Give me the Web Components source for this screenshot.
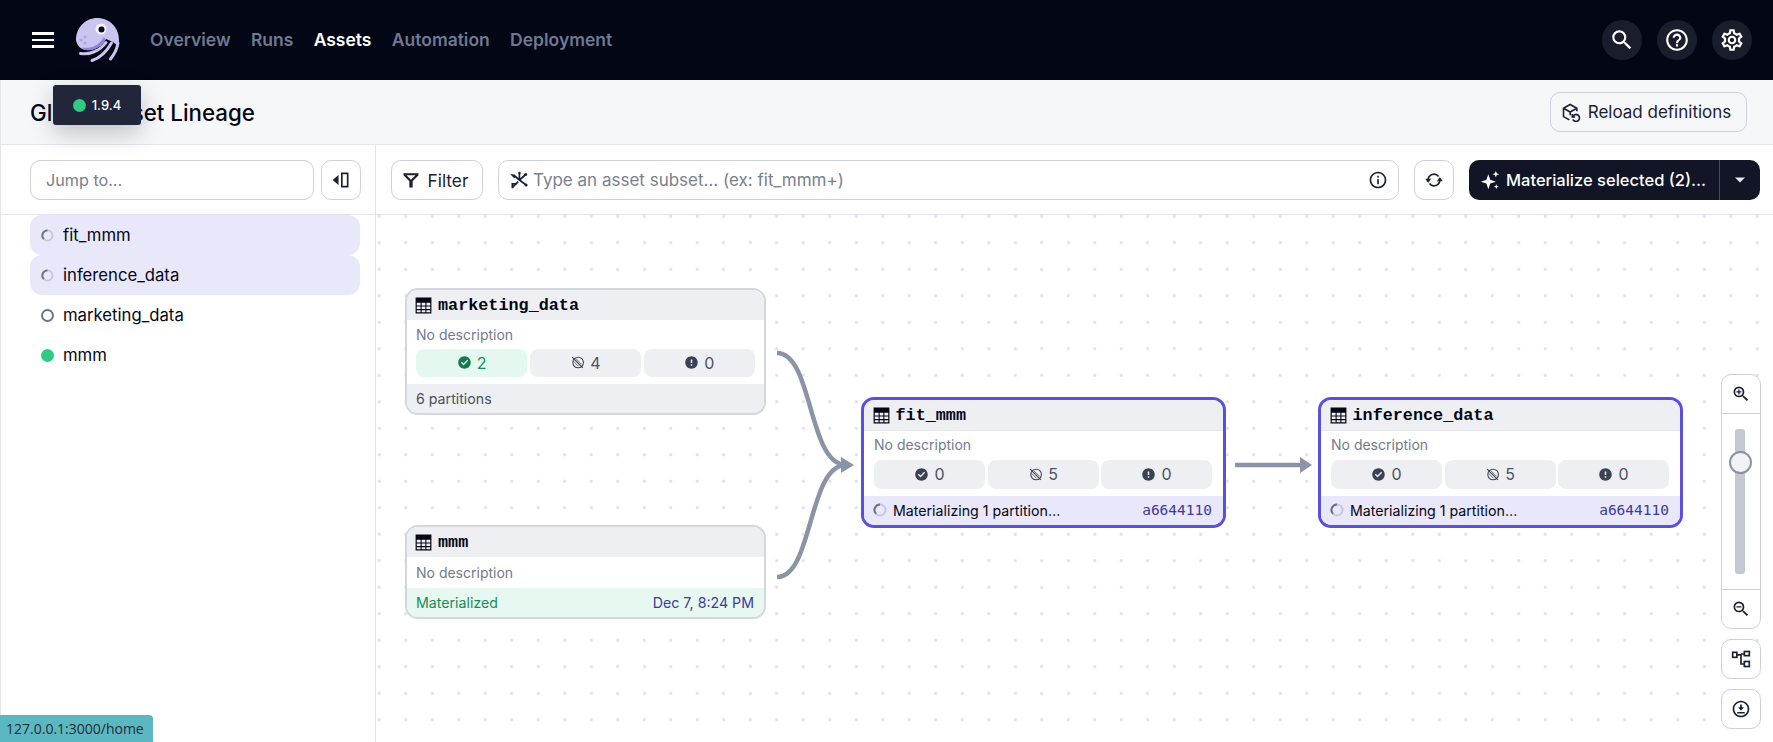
<!DOCTYPE html>
<html lang="en">
<head>
<meta charset="utf-8">
<title>Global Asset Lineage</title>
<style>
  html, body { margin: 0; height: 100%; overflow: hidden; background: #fff; }
  body { font-family: Inter, "Noto Sans", sans-serif; color: #030615; display: flex; flex-direction: column; }
  .main { flex: 1; display: flex; min-height: 0; }
</style>
</head>
<body>
<top-nav></top-nav>
<page-header></page-header>
<div class="main">
  <asset-sidebar></asset-sidebar>
  <graph-panel></graph-panel>
</div>
<version-tip></version-tip>
<link-status></link-status>

<script>
const ICONS = {
  search: '<path d="M15.5 14h-.79l-.28-.27A6.471 6.471 0 0 0 16 9.5 6.5 6.5 0 1 0 9.5 16c1.61 0 3.09-.59 4.23-1.57l.27.28v.79l5 4.99L20.49 19l-4.99-5zm-6 0C7.01 14 5 11.99 5 9.5S7.01 5 9.5 5 14 7.01 14 9.5 11.99 14 9.5 14z"/>',
  help: '<path d="M11 18h2v-2h-2v2zm1-16C6.48 2 2 6.48 2 12s4.48 10 10 10 10-4.48 10-10S17.52 2 12 2zm0 18c-4.41 0-8-3.59-8-8s3.59-8 8-8 8 3.59 8 8-3.59 8-8 8zm0-14c-2.21 0-4 1.79-4 4h2c0-1.1.9-2 2-2s2 .9 2 2c0 2-3 1.75-3 5h2c0-2.25 3-2.5 3-5 0-2.21-1.79-4-4-4z"/>',
  settings: '<path d="M19.43 12.98c.04-.32.07-.64.07-.98 0-.34-.03-.66-.07-.98l2.11-1.65c.19-.15.24-.42.12-.64l-2-3.46a.5.5 0 0 0-.61-.22l-2.49 1c-.52-.4-1.08-.73-1.69-.98l-.38-2.65A.488.488 0 0 0 14 2h-4c-.25 0-.46.18-.49.42l-.38 2.65c-.61.25-1.17.59-1.69.98l-2.49-1a.566.566 0 0 0-.18-.03c-.17 0-.34.09-.43.25l-2 3.46c-.13.22-.07.49.12.64l2.11 1.65c-.04.32-.07.65-.07.98 0 .33.03.66.07.98l-2.11 1.65c-.19.15-.24.42-.12.64l2 3.46a.5.5 0 0 0 .61.22l2.49-1c.52.4 1.08.73 1.69.98l.38 2.65c.03.24.24.42.49.42h4c.25 0 .46-.18.49-.42l.38-2.65c.61-.25 1.17-.59 1.69-.98l2.49 1c.06.02.12.03.18.03.17 0 .34-.09.43-.25l2-3.46c.12-.22.07-.49-.12-.64l-2.11-1.65zm-1.98-1.71c.04.31.05.52.05.73 0 .21-.02.43-.05.73l-.14 1.13.89.7 1.08.84-.7 1.21-1.27-.51-1.04-.42-.9.68c-.43.32-.84.56-1.25.73l-1.06.43-.16 1.13-.2 1.35h-1.4l-.19-1.35-.16-1.13-1.06-.43c-.43-.18-.83-.41-1.23-.71l-.91-.7-1.06.43-1.27.51-.7-1.21 1.08-.84.89-.7-.14-1.13c-.03-.31-.05-.54-.05-.74s.02-.43.05-.73l.14-1.13-.89-.7-1.08-.84.7-1.21 1.27.51 1.04.42.9-.68c.43-.32.84-.56 1.25-.73l1.06-.43.16-1.13.2-1.35h1.39l.19 1.35.16 1.13 1.06.43c.43.18.83.41 1.23.71l.91.7 1.06-.43 1.27-.51.7 1.21-1.07.85-.89.7.14 1.13zM12 8c-2.21 0-4 1.79-4 4s1.79 4 4 4 4-1.79 4-4-1.79-4-4-4zm0 6c-1.1 0-2-.9-2-2s.9-2 2-2 2 .9 2 2-.9 2-2 2z"/>',
  check: '<path d="M12 2C6.48 2 2 6.48 2 12s4.48 10 10 10 10-4.48 10-10S17.52 2 12 2zm-1.6 14.6L6.2 12.4l1.5-1.5 2.7 2.7 5.9-5.9 1.5 1.5-7.4 7.4z"/>',
  error: '<path d="M12 2C6.48 2 2 6.48 2 12s4.48 10 10 10 10-4.48 10-10S17.52 2 12 2zm1.2 15h-2.4v-2.2h2.4V17zm0-4.2h-2.4V7h2.4v5.8z"/>',
  blocked: '<g fill="none" stroke="currentColor"><circle cx="13" cy="12" r="8.5" stroke-width="1.700"/><path d="M3.500 3.500l17 17" stroke-width="1.800"/><path d="M9 5.500l9.500 9.500M5.500 10l8 8" stroke-width="1.200"/></g>',
  table: '<path fill-rule="evenodd" d="M2 2h20v20H2V2zm1.500 6.500v3.500h4.800V8.500H3.500zm6.200 0v3.500h4.600V8.500H9.700zm6 0v3.500h4.800V8.500h-4.800zM3.500 13.400v3.100h4.800v-3.100H3.500zm6.200 0v3.100h4.600v-3.100H9.700zm6 0v3.100h4.800v-3.100h-4.800zM3.500 18v2.500h4.800V18H3.500zm6.200 0v2.500h4.600V18H9.700zm6 0v2.500h4.800V18h-4.800z"/>',
  filter: '<path d="M3 4h18v2.400l-7 7.200V21h-4v-7.400L3 6.400V4zm3.600 2.200l5.400 5.600 5.400-5.600H6.600z"/>',
  burst: '<g stroke="currentColor" stroke-width="2" fill="currentColor"><path d="M12.500 12L5.500 6M12.500 12V4M12.500 12l7-6M12.500 12l8 6M11 14l-6 6" fill="none"/><path d="M1.500 5h3.500l3 3.300-1.800 1.700z" stroke="none"/><circle cx="12.500" cy="3.500" r="1.500" stroke="none"/><circle cx="20" cy="5.500" r="1.800" stroke="none"/><circle cx="20.500" cy="18" r="1.800" stroke="none"/><path d="M3 15.500h6.500v2H5.500V22H3z" stroke="none"/></g>',
  info: '<path d="M11 7h2v2h-2V7zm0 4h2v6h-2v-6zm1-9C6.480 2 2 6.480 2 12s4.480 10 10 10 10-4.480 10-10S17.520 2 12 2zm0 18c-4.410 0-8-3.590-8-8s3.590-8 8-8 8 3.590 8 8-3.590 8-8 8z"/>',
  sync: '<g fill="none" stroke="currentColor" stroke-width="2"><path d="M5 12a7 7 0 0 1 12.500-4.300"/><path d="M19 12a7 7 0 0 1-12.500 4.300"/></g><path d="M1.500 10.500h7L5 15.500zM15.500 13.500h7L19 8.500z"/>',
  sparkle: '<path d="M10 5l2.300 6.700L19 14l-6.700 2.300L10 23l-2.300-6.700L1 14l6.700-2.300L10 5zM19 1l1 3 3 1-3 1-1 3-1-3-3-1 3-1 1-3zM19.500 17l.8 2.200 2.200.8-2.200.8-.8 2.200-.8-2.200-2.200-.8 2.200-.8.800-2.200z"/>',
  caret: '<path d="M6 9h12l-6 6z"/>',
  collapse: '<path d="M9 6v12L2 12zM12 3h9v18h-9V3zm2 2v14h5V5h-5z"/>',
  reload: '<g fill="none" stroke="currentColor" stroke-width="1.900"><path d="M10 21.500L3 17.500V7.500L11 3l8 4.500v3.500M3 7.500l8 4.500 8-4.500M11 12v4"/><path d="M13.500 14.500v3.500H17M14 18a4.200 4.200 0 1 1 .2 2.800"/></g>',
  zoomIn: '<path d="M15.500 14h-.79l-.28-.27A6.471 6.471 0 0 0 16 9.500 6.500 6.500 0 1 0 9.500 16c1.610 0 3.090-.59 4.230-1.570l.27.28v.79l5 4.990L20.490 19l-4.990-5zm-6 0C7.010 14 5 11.990 5 9.500S7.010 5 9.500 5 14 7.010 14 9.500 11.990 14 9.500 14zM10.300 6.500H8.700v2.200H6.500v1.600h2.200v2.200h1.600v-2.200h2.200V8.700h-2.200z"/>',
  zoomOut: '<path d="M15.500 14h-.79l-.28-.27A6.471 6.471 0 0 0 16 9.500 6.500 6.500 0 1 0 9.500 16c1.610 0 3.090-.59 4.230-1.570l.27.28v.79l5 4.990L20.490 19l-4.990-5zm-6 0C7.010 14 5 11.990 5 9.500S7.010 5 9.500 5 14 7.010 14 9.500 11.990 14 9.500 14zM6.500 8.700h6v1.600h-6z"/>',
  tree: '<g fill="none" stroke="currentColor" stroke-width="2"><rect x="2" y="4" width="5" height="6"/><rect x="16" y="3" width="6" height="5"/><rect x="16" y="15" width="6" height="6"/><path d="M7 7h5v11h4M12 6h4"/></g>',
  download: '<path d="M12 2C6.480 2 2 6.480 2 12s4.480 10 10 10 10-4.480 10-10S17.520 2 12 2zm0 18c-4.410 0-8-3.590-8-8s3.590-8 8-8 8 3.590 8 8-3.590 8-8 8zM7.500 15.500h9v1.800h-9zM13 6.500h-2v3.500H8.500l3.500 4 3.500-4H13z"/>'
};

function icon(name, size) {
  return `<svg width="${size}" height="${size}" viewBox="0 0 24 24" fill="currentColor" aria-hidden="true">${ICONS[name]}</svg>`;
}

function spinner(size) {
  return `<svg width="${size}" height="${size}" viewBox="0 0 14 14" fill="none" aria-hidden="true">
    <circle cx="7" cy="7" r="5.500" stroke="#c6c9d4" stroke-width="2"/>
    <path d="M7 1.500A5.500 5.500 0 0 0 3 10.800" stroke="#6c7387" stroke-width="2"/>
  </svg>`;
}

class Base extends HTMLElement {
  constructor() {
    super();
    this.shadowDOM = this.attachShadow({ mode: "open" });
  }

  connectedCallback() {
    this.render();
  }
}

class TopNav extends Base {
  render() {
    const links = ["Overview", "Runs", "Assets", "Automation", "Deployment"];
    this.shadowDOM.innerHTML = `
      <style>
      :host { display: flex; align-items: center; flex: 0 0 80px; height: 80px; background: #030615; box-sizing: border-box; padding: 0 21px 0 32px; }
      .burger { display: flex; flex-direction: column; gap: 4px; width: 22px; margin-right: 21px; }
      .burger i { height: 2.600px; background: #fff; display: block; }
      .logo { display: block; margin-right: 30px; }
      nav { display: flex; gap: 20.300px; padding-bottom: 1px; font-size: 17.500px; font-weight: 600; }
      nav a { color: #6f7a92; }
      nav a.on { color: #fff; }
      .tools { margin-left: auto; display: flex; gap: 15px; }
      .tools span { width: 40px; height: 40px; border-radius: 50%; background: #191d2c; color: #fff; display: flex; align-items: center; justify-content: center; }
      </style>
      <div class="burger"><i></i><i></i><i></i></div>
      <svg class="logo" width="45" height="45" viewBox="0 0 45 45" aria-hidden="true">
        <path d="M1 22C1 9 11 0 22 0c13 0 22 10 22 22 0 2-.3 4-1 6l-5-4-7-3c-4 8-13 12-21 11-4-1-8-4-9-10z" fill="#c9c5ee"/>
        <path d="M7 29.500c8 1.500 17-1.500 21.500-10L31 21c-4 8-13 12-21 11z" fill="#8d87d6"/>
        <g fill="none" stroke="#c9c5ee" stroke-width="3" stroke-linecap="round">
          <path d="M5.500 35.500C14 37 25 33 31 24.500"/>
          <path d="M17 42.500C25 40 32 33 36.500 25"/>
          <path d="M35.500 41C39.500 36 42 31 43 25"/>
        </g>
        <circle cx="26" cy="11" r="5.500" fill="#f5f4fc"/>
        <circle cx="26.500" cy="11.500" r="3" fill="#0a0d1e"/>
        <g fill="#a8a3e2"><circle cx="6" cy="22" r="1.600"/><circle cx="10" cy="19" r="1.400"/><circle cx="10" cy="25" r="1.600"/></g>
      </svg>
      <nav>${links.map((l) => `<a class="${l === "Assets" ? "on" : ""}">${l}</a>`).join("")}</nav>
      <div class="tools">
        <span>${icon("search", 26)}</span>
        <span>${icon("help", 26)}</span>
        <span>${icon("settings", 26)}</span>
      </div>
    `;
  }
}

class PageHeader extends Base {
  render() {
    this.shadowDOM.innerHTML = `
      <style>
      :host { display: flex; align-items: center; justify-content: space-between; flex: 0 0 65px; box-sizing: border-box; height: 65px; padding: 0 26px 0 30px; background: #f6f7f9; border-bottom: 1px solid #e3e5ea; border-left: 1px solid #e3e5ea; }
      h1 { margin: 0 0 0 -1px; font-size: 22.300px; font-weight: 500; }
      </style>
      <h1>Global Asset Lineage</h1>
      <tool-button label="Reload definitions" icon="reload" style="width:197px;background:transparent;font-size:17px;padding-right:5px"></tool-button>
    `;
  }
}

class ToolButton extends Base {
  render() {
    const name = this.getAttribute("icon");
    const label = this.getAttribute("label");
    this.shadowDOM.innerHTML = `
      <style>
      :host { display: flex; align-items: center; justify-content: center; gap: 7px; box-sizing: border-box; height: 40px; min-width: 40px; background: #fff; border: 1.500px solid #ced1db; border-radius: 10px; font-size: 17.300px; color: #1b2032; flex: none; }
      </style>
      ${icon(name, 20)}${label ? `<span>${label}</span>` : ""}
    `;
  }
}

class AssetSidebar extends Base {
  render() {
    const rows = [
      ["fit_mmm", "run"],
      ["inference_data", "run"],
      ["marketing_data", "missing"],
      ["mmm", "ok"]
    ];
    this.shadowDOM.innerHTML = `
      <style>
      :host { display: flex; flex-direction: column; flex: 0 0 376px; box-sizing: border-box; width: 376px; border-right: 1.500px solid #e3e5ea; border-left: 1px solid #e3e5ea; }
      .search { display: flex; gap: 7px; height: 70px; box-sizing: border-box; padding: 15px 14px 0 29px; border-bottom: 1px solid #e3e5ea; }
      .jump { flex: 1; height: 40px; box-sizing: border-box; border: 1.500px solid #ced1db; border-radius: 10px; padding-left: 15px; display: flex; align-items: center; color: #79808f; font-size: 16.200px; }
      ul { list-style: none; margin: 0; padding: 0 15px 0 29px; }
      li { display: flex; align-items: center; height: 40px; gap: 9px; padding-left: 11px; border-radius: 12px; font-size: 16.700px; }
      li.sel { background: #e9e7fa; }
      .dot { width: 13px; height: 13px; box-sizing: border-box; border-radius: 50%; flex: none; }
      .ok { background: #2fcb82; }
      .missing { border: 2.400px solid #6b7388; }
      .run { display: flex; }
      </style>
      <div class="search">
        <div class="jump">Jump to…</div>
        <tool-button icon="collapse"></tool-button>
      </div>
      <ul>
        ${rows.map(([name, state]) => `
          <li class="${state === "run" ? "sel" : ""}">
            <span class="dot ${state}">${state === "run" ? spinner(13) : ""}</span>${name}
          </li>`).join("")}
      </ul>
    `;
  }
}

class GraphToolbar extends Base {
  render() {
    this.shadowDOM.innerHTML = `
      <style>
      :host { display: flex; gap: 15px; height: 70px; flex: 0 0 70px; box-sizing: border-box; padding: 15px 13px 0 15px; border-bottom: 1px solid #e3e5ea; }
      .query { flex: 1; display: flex; align-items: center; gap: 4px; height: 40px; box-sizing: border-box; border: 1.500px solid #ced1db; border-radius: 10px; padding: 0 10px; color: #79808f; font-size: 17px; }
      .query svg { flex: none; color: #1b2032; }
      .query .i { margin-left: auto; display: flex; }
      .mat { display: flex; height: 40px; width: 291px; flex: none; background: #111525; border-radius: 10px; color: #fff; font-size: 16.500px; font-weight: 500; box-sizing: border-box; }
      .mat .l { flex: 1; display: flex; align-items: center; gap: 6px; padding-left: 11px; white-space: nowrap; }
      .mat .r { flex: 0 0 40px; border-left: 1px solid #454a5c; display: flex; align-items: center; justify-content: center; color: #e8e9ee; }
      </style>
      <tool-button icon="filter" label="Filter" style="width:92px;padding-right:5px"></tool-button>
      <div class="query">${icon("burst", 20)}<span>Type an asset subset… (ex: fit_mmm+)</span><span class="i">${icon("info", 20)}</span></div>
      <tool-button icon="sync"></tool-button>
      <div class="mat">
        <div class="l">${icon("sparkle", 20)}<span>Materialize selected (2)…</span></div>
        <div class="r">${icon("caret", 20)}</div>
      </div>
    `;
  }
}

class AssetNode extends Base {
  render() {
    const name = this.getAttribute("name");
    this.shadowDOM.innerHTML = `
      <style>
      :host { display: flex; flex-direction: column; position: absolute; box-sizing: border-box; overflow: hidden; background: #fff; border: 2px solid #d3d6dd; border-radius: 13px; color: #030615; }
      :host([selected]) { border: 3.400px solid #5a4fe0; }
      .head { flex: 0 0 30px; display: flex; align-items: center; gap: 5px; padding-left: 7px; background: #eeeff2; }
      :host([selected]) .head { border-bottom: 1px solid #e6e7eb; padding-left: 7.500px; }
      .head b { font: 700 16.800px "Liberation Mono", monospace; }
      .desc { flex: 1; display: flex; align-items: center; padding: 0 9px; font-size: 14px; color: #727a8c; }
      :host([selected]) .desc { padding: 0 10px 1.500px; }
      ::slotted([slot="stats"]) { margin: 0 9px 7px; }
      :host([selected]) ::slotted([slot="stats"]) { margin: 0 11px 7.500px 10px; }
      ::slotted([slot="foot"]) { flex: 0 0 28px; }
      </style>
      <div class="head">${icon("table", 19)}<b>${name}</b></div>
      <div class="desc">No description</div>
      <slot name="stats"></slot>
      <slot name="foot"></slot>
    `;
  }
}

class StatRow extends Base {
  render() {
    const [ok, skip, err] = this.getAttribute("values").split(",");
    const okClass = ok !== "0" ? "good" : "";
    this.shadowDOM.innerHTML = `
      <style>
      :host { display: grid; grid-template-columns: 1fr 1fr 1fr; gap: 2.500px; height: 28.500px; font-size: 16px; color: #4a5165; }
      div { display: flex; align-items: center; justify-content: center; gap: 5px; background: #eeeff2; border-radius: 8px; }
      svg { color: #3b4256; }
      .good { background: #e4f8ef; color: #1a8a5a; }
      .good svg { color: #16794e; }
      </style>
      <div class="${okClass}">${icon("check", 15)}${ok}</div>
      <div>${icon("blocked", 15)}${skip}</div>
      <div>${icon("error", 15)}${err}</div>
    `;
  }
}

class NodeFoot extends Base {
  render() {
    const kind = this.getAttribute("kind") || "plain";
    const spin = kind === "run" ? spinner(14) : "";
    this.shadowDOM.innerHTML = `
      <style>
      :host { display: flex; align-items: center; justify-content: space-between; padding: 0 10px 1px 9px; font-size: 14.200px; background: #eeeff2; color: #4a5165; }
      :host([kind="good"]) { background: #e6f8f0; }
      :host([kind="run"]) { background: #e9e7fa; color: #030615; }
      .l { display: flex; align-items: center; gap: 6px; }
      :host([kind="good"]) .l { color: #1a8a5a; }
      ::slotted(*) { color: #3d3a9a; }
      </style>
      <span class="l">${spin}<span>${this.getAttribute("label")}</span></span>
      <slot></slot>
    `;
  }
}

class GraphCanvas extends Base {
  render() {
    this.shadowDOM.innerHTML = `
      <style>
      :host { display: block; position: relative; flex: 1; min-height: 0; overflow: hidden; background-color: #fff;
        background-image: radial-gradient(circle, #e2e4e9 1.400px, transparent 1.700px);
        background-size: 26.500px 26.500px; background-position: -10px -12px; }
      svg.edges { position: absolute; left: 0; top: 0; width: 100%; height: 100%; }
      </style>
      <svg class="edges" aria-hidden="true" fill="none" stroke="#8a94a6" stroke-width="4.500">
        <path d="M401 138C437 138 432 250 470 250"/>
        <path d="M401 362C437 362 432 250 470 250"/>
        <path d="M465 242l13 8-13 8z" fill="#8a94a6" stroke="none"/>
        <path d="M859 250H926"/>
        <path d="M924 242l12 8-12 8z" fill="#8a94a6" stroke="none"/>
      </svg>
      <slot></slot>
    `;
  }
}

class ZoomControls extends Base {
  render() {
    this.shadowDOM.innerHTML = `
      <style>
      :host { position: absolute; right: 12px; top: 229px; width: 40px; display: flex; flex-direction: column; gap: 10px; color: #1b2032; }
      .box { background: #fff; border: 1.500px solid #ced1db; border-radius: 10px; box-sizing: border-box; display: flex; align-items: center; justify-content: center; height: 40px; }
      .stack { height: 255px; flex-direction: column; }
      .btn { flex: 0 0 38px; display: flex; align-items: center; justify-content: center; width: 100%; }
      .track { flex: 1; width: 100%; position: relative; border-top: 1.500px solid #ced1db; border-bottom: 1.500px solid #ced1db; box-sizing: border-box; }
      .rail { position: absolute; left: 13px; top: 15px; bottom: 15px; width: 10px; background: #c4c8d2; border-radius: 3px; }
      .thumb { position: absolute; left: 7px; top: 37px; width: 23px; height: 23px; box-sizing: border-box; border: 2px solid #8a94a6; border-radius: 50%; background: #f2f3f6; }
      </style>
      <div class="box stack">
        <div class="btn">${icon("zoomIn", 20)}</div>
        <div class="track"><div class="rail"></div><div class="thumb"></div></div>
        <div class="btn">${icon("zoomOut", 20)}</div>
      </div>
      <div class="box">${icon("tree", 20)}</div>
      <div class="box">${icon("download", 20)}</div>
    `;
  }
}

class GraphPanel extends Base {
  render() {
    const hash = `<span style="font-family:'DejaVu Sans Mono',monospace;font-size:14.500px;margin-right:1px">a6644110</span>`;
    this.shadowDOM.innerHTML = `
      <style>
      :host { display: flex; flex-direction: column; flex: 1; min-width: 0; position: relative; }
      </style>
      <graph-toolbar></graph-toolbar>
      <graph-canvas>
        <asset-node name="marketing_data" style="left:29px;top:73px;width:361px;height:127px">
          <stat-row slot="stats" values="2,4,0"></stat-row>
          <node-foot slot="foot" label="6 partitions"></node-foot>
        </asset-node>
        <asset-node name="mmm" style="left:29px;top:310px;width:361px;height:94px">
          <node-foot slot="foot" kind="good" label="Materialized"><span>Dec 7, 8:24 PM</span></node-foot>
        </asset-node>
        <asset-node selected name="fit_mmm" style="left:485px;top:182px;width:365px;height:131px">
          <stat-row slot="stats" values="0,5,0"></stat-row>
          <node-foot slot="foot" kind="run" label="Materializing 1 partition…">${hash}</node-foot>
        </asset-node>
        <asset-node selected name="inference_data" style="left:942px;top:182px;width:365px;height:131px">
          <stat-row slot="stats" values="0,5,0"></stat-row>
          <node-foot slot="foot" kind="run" label="Materializing 1 partition…">${hash}</node-foot>
        </asset-node>
      </graph-canvas>
      <zoom-controls></zoom-controls>
    `;
  }
}

class VersionTip extends Base {
  render() {
    this.shadowDOM.innerHTML = `
      <style>
      :host { position: absolute; left: 53px; top: 85px; width: 88px; height: 40px; display: flex; align-items: center; justify-content: center; gap: 6px; background: #21263a; border-radius: 3px; color: #fff; font-size: 13px; font-weight: 500; box-shadow: 0 8px 24px rgba(3, 6, 21, .22); }
      i { width: 13px; height: 13px; border-radius: 50%; background: #2fcb82; }
      </style>
      <i></i><span>1.9.4</span>
    `;
  }
}

class LinkStatus extends Base {
  render() {
    this.shadowDOM.innerHTML = `
      <style>
      :host { position: absolute; left: 0; bottom: 0; height: 27px; width: 153px; display: flex; align-items: center; padding-left: 6px; box-sizing: border-box; background: #5cb8c0; border-top-right-radius: 4px; color: #1f2a3a; font: 14px "Open Sans", sans-serif; }
      </style>
      127.0.0.1:3000/home
    `;
  }
}

customElements.define("tool-button", ToolButton);
customElements.define("stat-row", StatRow);
customElements.define("node-foot", NodeFoot);
customElements.define("asset-node", AssetNode);
customElements.define("graph-canvas", GraphCanvas);
customElements.define("graph-toolbar", GraphToolbar);
customElements.define("zoom-controls", ZoomControls);
customElements.define("graph-panel", GraphPanel);
customElements.define("asset-sidebar", AssetSidebar);
customElements.define("page-header", PageHeader);
customElements.define("top-nav", TopNav);
customElements.define("version-tip", VersionTip);
customElements.define("link-status", LinkStatus);
</script>
</body>
</html>
